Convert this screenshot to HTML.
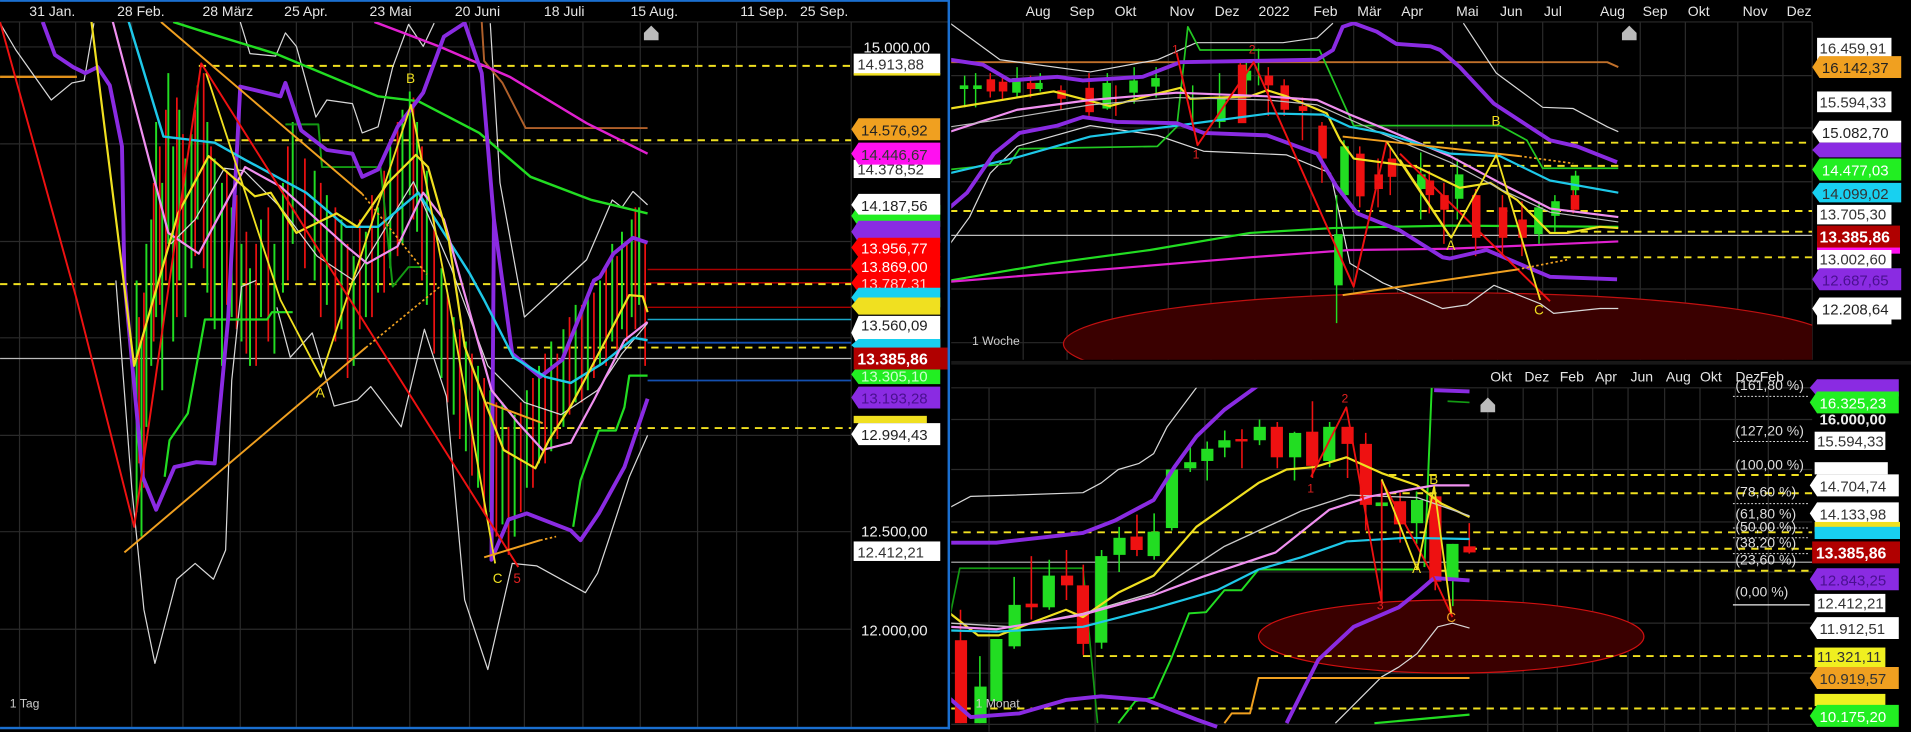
<!DOCTYPE html>
<html><head><meta charset="utf-8"><style>
html,body{margin:0;padding:0;background:#000;}
svg{display:block;}
text{font-family:"Liberation Sans",sans-serif;}
</style></head><body>
<svg width="1911" height="732" viewBox="0 0 1567 600.25" xmlns="http://www.w3.org/2000/svg">
<rect width="1567" height="601" fill="#000"/>
<defs>
<clipPath id="cL"><rect x="0" y="18" width="698" height="578"/></clipPath>
<clipPath id="cT"><rect x="780" y="18" width="706" height="277"/></clipPath>
<clipPath id="cB"><rect x="780" y="318" width="706" height="282"/></clipPath>
</defs>

<!-- ================= LEFT PANEL ================= -->
<g stroke="#2a2a2a" stroke-width="1">
<path d="M0 18H778 M0 38.5H698 M0 118H698 M0 198H698 M0 277H698 M0 357H698 M0 436H698 M0 516H698"/>
<path d="M16 18V596 M62 18V596 M108 18V596 M150 18V596 M197 18V596 M243 18V596 M289 18V596 M336 18V596 M385 18V596 M430 18V596 M478 18V596 M525 18V596 M572 18V596 M604 18V596 M654 18V596 M698 18V596"/>
</g>
<g fill="#e6e6e6" font-size="11.5">
<text x="24" y="13">31 Jan.</text><text x="96" y="13">28 Feb.</text><text x="166" y="13">28 März</text>
<text x="233" y="13">25 Apr.</text><text x="303" y="13">23 Mai</text><text x="373" y="13">20 Juni</text>
<text x="446" y="13">18 Juli</text><text x="517" y="13">15 Aug.</text><text x="607" y="13">11 Sep.</text><text x="656" y="13">25 Sep.</text>
</g>
<path d="M528 27 l6 -6 l6 6 v6 h-12z" fill="#bbb"/>

<g clip-path="url(#cL)" fill="none" stroke-linejoin="round">
<!-- horizontal level lines -->
<path d="M0 294H698" stroke="#bbb" stroke-width="1"/>
<path d="M531 221H698 M531 252H698" stroke="#a00" stroke-width="1.2"/>
<path d="M531 232H698" stroke="#c00" stroke-width="1"/>
<path d="M531 262H698" stroke="#1aa6c8" stroke-width="1.2"/>
<path d="M531 281H698 M531 312H698" stroke="#1450b0" stroke-width="1.5"/>
<path d="M0 63H63" stroke="#e0901a" stroke-width="2"/>
<g stroke="#f0e020" stroke-width="1.6" stroke-dasharray="6 5">
<path d="M163 54H698 M176 115H698 M0 233H698 M413 285H698 M410 351H698"/>
</g>
<!-- candles -->
<path stroke="#22dd22" stroke-width="1.6" d="M112 230V420 M116 280V440 M120 200V350 M124 180V300 M128 100V260 M133 150V320 M138 60V200 M142 120V280 M147 90V230 M152 130V260 M157 110V220 M162 70V180 M170 100V240 M176 130V270 M182 150V300 M190 170V260 M198 200V280 M205 220V300 M214 180V260 M225 200V290 M232 150V240 M240 100V200 M258 140V230 M268 160V250 M280 180V270 M290 210V300 M300 190V260 M310 170V240 M320 120V220 M330 90V200 M336 75V160 M342 100V190 M350 140V250 M362 220V310 M372 260V340 M382 280V370 M392 300V400 M402 320V420 M412 330V430 M422 340V440 M432 320V400 M442 300V380 M452 280V370 M462 270V350 M472 250V330 M482 240V320 M492 230V300 M502 200V280 M510 190V270 M518 180V260 M524 170V250"/>
<path stroke="#ee1111" stroke-width="1.4" d="M114 260V380 M118 240V400 M126 150V280 M131 120V250 M136 90V230 M145 80V260 M150 110V200 M160 90V210 M167 60V220 M173 120V260 M186 140V250 M194 160V270 M202 190V290 M210 200V300 M220 170V280 M236 120V230 M250 130V220 M263 150V260 M275 170V280 M285 200V310 M295 180V270 M305 160V260 M315 140V240 M326 100V210 M339 80V180 M346 120V230 M356 180V290 M367 240V330 M377 270V360 M387 290V390 M397 310V420 M407 330V440 M417 350V455 M427 330V420 M437 310V400 M447 290V380 M457 290V360 M467 260V340 M477 250V330 M487 240V310 M497 220V300 M506 210V290 M514 200V280 M521 170V270 M529 200V300"/>
<!-- white envelopes -->
<g stroke="#d8d8d8" stroke-width="1">
<path d="M0 19L13 41L42 82L59 68L69 66L77 19"/>
<path d="M197 18L205 44L226 46L234 27L243 38L259 96L268 82L289 85L297 109L310 104L322 55L335 20L347 38L356 19"/>
<path d="M95 230L108 400L118 500L127 544L145 475L160 462L175 475L185 451L190 312L198 235L210 230"/>
<path d="M227 252L238 293L256 273L274 333L293 328L304 317L329 350L348 270L366 325L381 492L400 549L420 462L440 464L480 486L490 470L500 440L516 391L531 357"/>
<path d="M402 19L410 150L430 260L481 213L502 164L510 170L519 157L531 168"/>
<path d="M140 200L160 180L184 138L200 140L230 170L260 210L290 230L339 149L370 220L400 300L430 330L460 340L490 320L510 290L531 265"/>
</g>
<!-- green long MA -->
<path d="M142 18L167 26L226 44L310 79L343 83L393 109L435 145L485 164L531 175" stroke="#22dd22" stroke-width="2"/>
<path d="M395 18L397 50L412 68L431 105L531 105" stroke="#b0602a" stroke-width="1.6"/>
<path d="M307 18L360 38L418 63L481 101L531 126" stroke="#e020d0" stroke-width="2"/>
<!-- green steps -->
<path d="M135 391L139 361L154 339L168 262L219 262L223 256L240 256" stroke="#22dd22" stroke-width="1.8"/>
<path d="M470 432L476 394L491 353L505 353L512 334L516 308L531 308" stroke="#22dd22" stroke-width="1.8"/>
<path d="M234 102L261 102L264 137L312 137L322 235L335 219L345 219" stroke="#139a13" stroke-width="1.6"/>
<!-- purple bands -->
<g stroke="#8a2be2" stroke-width="3.2">
<path d="M35 18L45 45L60 55L70 60L80 55L90 70L100 120L102 230L117 391L128 418L143 383L161 379L176 380L187 262L197 71L230 79L234 68L247 107L268 123L289 126L297 145L310 139L326 104L347 76L364 30L381 19L395 60L405 180L403 459L417 426L432 421L468 435L476 443L491 421L512 383L531 327"/>
<path d="M405 180L420 290L443 309L461 295L487 230L492 227L503 208L519 195L531 199"/>
</g>
<!-- cyan / pink MAs -->
<path d="M105 16L134 112L176 117L201 131L251 158L284 186L310 186L343 158L364 191L385 224L397 246L421 293L447 309L468 314L494 298L520 277L531 279" stroke="#1ec8e8" stroke-width="2"/>
<path d="M92 16L138 191L163 208L201 137L230 153L284 202L301 216L326 202L347 158L364 180L403 320L425 347L445 369L468 363L487 328L512 279L531 264" stroke="#f090f0" stroke-width="1.8"/>
<!-- yellow MA -->
<path d="M75 18L110 300L146 175L171 128L209 161L222 158L243 191L276 175L293 186L318 150L341 127L351 137L368 197L381 284L399 333L413 369L439 384L450 361L468 333L494 284L516 242L527 243L531 256" stroke="#f0e020" stroke-width="1.8"/>
<!-- zigzags -->
<path d="M169 60L230 246L263 309L337 86L368 246L406 462" stroke="#f0e020" stroke-width="1.5"/>
<path d="M0 18L63 246L110 432L139 230L165 52L425 465" stroke="#ee1111" stroke-width="1.6"/>
<path d="M132 18L297 159" stroke="#f0a020" stroke-width="1.6"/>
<path d="M297 159L350 225" stroke="#f0a020" stroke-width="1.4" stroke-dasharray="2 2"/>
<path d="M102 453L300 285" stroke="#f0a020" stroke-width="1.6"/>
<path d="M300 285L362 234" stroke="#f0a020" stroke-width="1.4" stroke-dasharray="2 2"/>
<path d="M397 457L443 443" stroke="#f0a020" stroke-width="1.6"/>
<path d="M443 443L456 440" stroke="#f0a020" stroke-width="1.4" stroke-dasharray="2 2"/>
<path d="M399 330L445 347" stroke="#f0a020" stroke-width="1.6"/>
</g>
<g font-size="11">
<text x="333" y="68" fill="#f0e020">B</text>
<text x="259" y="326" fill="#f0e020">A</text>
<text x="404" y="478" fill="#f0e020">C</text>
<text x="421" y="478" fill="#e02020">5</text>
<text x="8" y="580" fill="#ccc" font-size="10">1 Tag</text>
</g>

<!-- left labels -->
<g font-size="12.3">
<text x="708" y="43" fill="#eee">15.000,00</text>
<rect x="700" y="44" width="71" height="17" fill="#fff"/><rect x="700" y="60" width="71" height="2" fill="#f0e020"/><text x="703" y="57" fill="#333">14.913,88</text>
<rect x="700" y="131" width="71" height="15" fill="#fff"/><text x="703" y="143" fill="#333">14.378,52</text>
<path d="M698 106l6-9h67v18h-67z" fill="#f0a020"/><text x="706" y="111" fill="#222">14.576,92</text>
<path d="M698 126l6-9h67v18h-67z" fill="#ff10f0"/><text x="706" y="131" fill="#333">14.446,67</text>
<path d="M698 177l6-9h67v18h-67z" fill="#22ee22"/>
<path d="M698 168l6-9h67v17h-67z" fill="#fff"/><text x="706" y="173" fill="#222">14.187,56</text>
<path d="M698 190l6-9h67v18h-67z" fill="#8a2be2"/>
<path d="M698 203l6-8h67v16h-67z" fill="#f00"/><text x="706" y="208" fill="#fff">13.956,77</text>
<path d="M698 218l6-8h67v16h-67z" fill="#f00"/><text x="706" y="223" fill="#fff">13.869,00</text>
<path d="M698 232l6-8h67v16h-67z" fill="#f00"/><text x="706" y="237" fill="#fcc">13.787,31</text>
<path d="M698 244l6-8h67v16h-67z" fill="#18d0f0"/>
<path d="M698 251l6-7h67v14h-67z" fill="#f0e020"/>
<path d="M698 273l6-14h67v26h-67z" fill="#fff"/><text x="706" y="271" fill="#222">13.560,09</text>
<path d="M698 283l6-5h67v10h-67z" fill="#18d0f0"/>
<path d="M698 307l6-8h67v16h-67z" fill="#22ee22"/><text x="706" y="313" fill="#cfc">13.305,10</text>
<rect x="700" y="285" width="77" height="18" fill="#b00000"/><text x="703" y="299" fill="#fff" font-weight="bold" font-size="13">13.385,86</text>
<path d="M698 326l6-9h67v18h-67z" fill="#8a2be2"/><text x="706" y="331" fill="#4a1090">13.193,28</text>
<rect x="700" y="341" width="60" height="6" fill="#f0e020"/>
<path d="M698 356l6-9h67v18h-67z" fill="#fff"/><text x="706" y="361" fill="#222">12.994,43</text>
<text x="706" y="440" fill="#eee">12.500,00</text>
<rect x="700" y="444" width="71" height="16" fill="#fff"/><text x="703" y="457" fill="#333">12.412,21</text>
<text x="706" y="521" fill="#eee">12.000,00</text>
</g>
<!-- left panel frame -->
<rect x="0" y="0" width="779" height="1.5" fill="#1a6fd0"/>
<rect x="777" y="0" width="2" height="598" fill="#1a6fd0"/>
<rect x="0" y="596" width="779" height="2" fill="#1a6fd0"/>

<!-- ================= TOP RIGHT PANEL ================= -->
<g stroke="#2a2a2a" stroke-width="1">
<path d="M780 18H1486 M780 62H1486 M780 105H1486 M780 149H1486 M780 237H1486 M780 281H1486"/>
<path d="M839 18V295 M875 18V295 M912 18V295 M958 18V295 M993 18V295 M1029 18V295 M1075 18V295 M1110 18V295 M1146 18V295 M1191 18V295 M1228 18V295 M1265 18V295 M1310 18V295 M1345 18V295 M1382 18V295 M1425 18V295 M1462 18V295 M1486 18V295"/>
</g>
<g fill="#e6e6e6" font-size="11.5">
<text x="841" y="13">Aug</text><text x="877" y="13">Sep</text><text x="914" y="13">Okt</text><text x="959" y="13">Nov</text>
<text x="996" y="13">Dez</text><text x="1032" y="13">2022</text><text x="1077" y="13">Feb</text><text x="1113" y="13">Mär</text>
<text x="1149" y="13">Apr</text><text x="1194" y="13">Mai</text><text x="1230" y="13">Jun</text><text x="1266" y="13">Jul</text>
<text x="1312" y="13">Aug</text><text x="1347" y="13">Sep</text><text x="1384" y="13">Okt</text><text x="1429" y="13">Nov</text><text x="1465" y="13">Dez</text>
</g>
<path d="M1330 27 l6 -6 l6 6 v6 h-12z" fill="#bbb"/>
<g clip-path="url(#cT)" fill="none" stroke-linejoin="round">
<ellipse cx="1190" cy="282" rx="318" ry="42" fill="#3a0000" stroke="#c01010" stroke-width="1"/>
<path d="M779 193H1486" stroke="#bbb" stroke-width="1"/>
<g stroke="#f0e020" stroke-width="1.6" stroke-dasharray="6 5">
<path d="M1156 117H1486 M1156 136H1486 M779 173H1486 M1285 190H1486 M1271 211H1486"/>
</g>
<path d="M779 51H1318L1327 55" stroke="#c0702a" stroke-width="1.6"/>
<g stroke="#d8d8d8" stroke-width="1">
<path d="M779 19L820 49L894 59L949 49L981 35L1052 35L1080 31L1093 19M1200 19L1227 60L1265 88L1290 89L1318 104L1327 108"/>
<path d="M779 200L795 178L812 142L834 120L894 103L949 111L987 124L1055 127L1091 142L1107 216L1134 232L1167 246L1183 253L1203 250L1225 234L1263 249L1274 257L1312 253L1327 253"/>
</g>
<path d="M779 230L861 216L943 205L1025 191L1093 187L1189 185L1327 186" stroke="#22dd22" stroke-width="1.8"/>
<path d="M779 231L916 220L1025 211L1107 205L1189 204L1327 198" stroke="#e020d0" stroke-width="1.8"/>
<path d="M779 139L828 134L836 122L949 120L965 104L974 22L984 41L1082 41L1110 103L1230 103L1252 115L1265 138L1327 138" stroke="#22c822" stroke-width="1.4"/>
<!-- candles -->
<path stroke="#22dd22" stroke-width="1.2" d="M791 62V88 M800 60V88 M834 55V80 M853 60V75 M908 60V90 M930 55V85 M948 55V80 M978 70V100 M1000 60V105 M1022 50V80 M1032 40V70 M1096 160V265 M1102 115V160 M1165 125V180 M1195 130V180 M1262 165V200 M1275 160V190 M1292 140V165"/>
<path stroke="#ee1111" stroke-width="1.2" d="M812 60V80 M822 62V82 M845 62V80 M870 70V90 M893 60V95 M915 70V95 M1017 50V100 M1040 55V95 M1053 65V95 M1068 80V115 M1084 100V150 M1115 120V170 M1130 130V170 M1140 120V160 M1172 140V175 M1184 150V200 M1210 155V210 M1232 160V210 M1248 165V210 M1290 155V175"/>
<g fill="#22dd22">
<rect x="787" y="70" width="7" height="3"/><rect x="798" y="70" width="7" height="3"/><rect x="830" y="64" width="7" height="12"/><rect x="848" y="68" width="7" height="5"/><rect x="904" y="68" width="7" height="21"/><rect x="926" y="66" width="7" height="10"/><rect x="944" y="64" width="7" height="7"/><rect x="998" y="80" width="7" height="20"/><rect x="1019" y="58" width="7" height="8"/><rect x="1094" y="192" width="7" height="42"/><rect x="1099" y="120" width="7" height="40"/><rect x="1162" y="143" width="7" height="12"/><rect x="1193" y="143" width="7" height="20"/><rect x="1258" y="170" width="7" height="22"/><rect x="1272" y="165" width="7" height="12"/><rect x="1288" y="144" width="7" height="12"/>
</g>
<g fill="#ee1111">
<rect x="809" y="65" width="7" height="10"/><rect x="819" y="67" width="7" height="8"/><rect x="842" y="68" width="7" height="5"/><rect x="867" y="74" width="7" height="7"/><rect x="890" y="72" width="7" height="20"/><rect x="1015" y="53" width="7" height="48"/><rect x="1037" y="62" width="7" height="8"/><rect x="1050" y="70" width="7" height="20"/><rect x="1065" y="87" width="7" height="4"/><rect x="1081" y="103" width="7" height="27"/><rect x="1112" y="126" width="7" height="35"/><rect x="1127" y="143" width="7" height="12"/><rect x="1138" y="130" width="7" height="15"/><rect x="1169" y="148" width="7" height="12"/><rect x="1181" y="160" width="7" height="12"/><rect x="1207" y="160" width="7" height="35"/><rect x="1229" y="170" width="7" height="25"/><rect x="1245" y="180" width="7" height="15"/><rect x="1288" y="160" width="7" height="12"/>
</g>
<path d="M779 89L864 75L910 87L940 79L968 72L976 81L1025 79L1039 74L1055 79L1088 93L1099 115L1110 130L1162 137L1197 154L1222 150L1244 164L1271 191L1285 191L1312 186L1327 187" stroke="#f0e020" stroke-width="1.8"/>
<path d="M779 108L834 90L894 82L965 76L1039 79L1080 82L1107 94L1134 105L1189 128L1230 150L1271 171L1327 178" stroke="#f090f0" stroke-width="1.8"/>
<path d="M779 104L834 96L894 86L965 80L1039 82L1080 86L1107 98L1134 110L1189 133L1230 155L1271 174L1327 182" stroke="#bbb" stroke-width="1"/>
<path d="M779 142L834 129L894 112L965 103L1041 93L1085 94L1107 104L1134 109L1189 126L1230 128L1271 148L1327 158" stroke="#1ec8e8" stroke-width="1.8"/>
<g stroke="#8a2be2" stroke-width="3.2">
<path d="M779 49L806 53L828 66L867 63L888 66L937 63L968 51L1080 49L1093 41L1101 22L1110 19L1129 26L1145 36L1173 38L1181 41L1197 55L1225 85L1271 115L1293 120L1326 133"/>
<path d="M779 170L793 158L815 126L836 109L867 103L888 96L916 100L965 101L987 109L1039 111L1080 126L1096 153L1113 175L1148 189L1183 211L1189 212L1219 205L1271 227L1326 229"/>
</g>
<path d="M965 44L982 119L1028 51L1110 235L1137 116M1148 126L1271 247" stroke="#ee1111" stroke-width="1.6"/>
<path d="M1137 116L1189 194M1148 131L1190 195L1227 127L1263 246" stroke="#f0e020" stroke-width="1.5"/>
<path d="M1101 112L1246 128M1101 242L1244 221" stroke="#f0a020" stroke-width="1.6"/>
<path d="M1246 128L1290 134M1244 221L1285 213" stroke="#f0a020" stroke-width="1.4" stroke-dasharray="2 2"/>
</g>
<g font-size="11">
<text x="1223" y="103" fill="#f0e020">B</text><text x="1186" y="205" fill="#f0e020">A</text><text x="1258" y="258" fill="#f0e020">C</text>
<text x="1024" y="44" fill="#e02020" font-size="10">2</text><text x="961" y="44" fill="#e02020" font-size="10">1</text><text x="978" y="130" fill="#e02020" font-size="10">1</text>
<text x="797" y="283" fill="#ccc" font-size="10">1 Woche</text>
</g>
<!-- top right labels -->
<g font-size="12.3">
<rect x="1490" y="31" width="61" height="17" fill="#fff"/><text x="1492" y="44" fill="#333">16.459,91</text>
<rect x="1490" y="48" width="61" height="10" fill="#fff"/>
<path d="M1486 55l6-9h67v18h-67z" fill="#f0a020"/><text x="1494" y="60" fill="#222">16.142,37</text>
<rect x="1490" y="75" width="61" height="17" fill="#fff"/><text x="1492" y="88" fill="#333">15.594,33</text>
<path d="M1486 108l6-9h67v18h-67z" fill="#fff"/><text x="1494" y="113" fill="#222">15.082,70</text>
<path d="M1486 123l6-6h67v12h-67z" fill="#8a2be2"/>
<path d="M1486 139l6-9h67v18h-67z" fill="#22ee22"/><text x="1494" y="144" fill="#fff">14.477,03</text>
<path d="M1486 158l6-8h67v16h-67z" fill="#18d0f0"/><text x="1494" y="163" fill="#333">14.099,02</text>
<rect x="1490" y="168" width="61" height="16" fill="#fff"/><text x="1492" y="180" fill="#333">13.705,30</text>
<rect x="1490" y="198" width="68" height="10" fill="#ff10f0"/>
<rect x="1490" y="205" width="61" height="16" fill="#fff"/><text x="1492" y="217" fill="#333">13.002,60</text>
<rect x="1490" y="185" width="68" height="18" fill="#b00000"/><text x="1492" y="199" fill="#fff" font-weight="bold" font-size="13">13.385,86</text>
<path d="M1486 229l6-9h67v18h-67z" fill="#8a2be2"/><text x="1494" y="234" fill="#4a1090">12.687,65</text>
<rect x="1490" y="256" width="61" height="10" fill="#fff"/>
<path d="M1486 253l6-9h67v18h-67z" fill="#fff"/><text x="1494" y="258" fill="#222">12.208,64</text>
</g>
<rect x="780" y="296" width="787" height="3" fill="#181818"/>

<!-- ================= BOTTOM RIGHT PANEL ================= -->
<g stroke="#2a2a2a" stroke-width="1">
<path d="M780 318H1486 M780 344H1486 M780 385H1486 M780 428H1486 M780 469H1486 M780 511H1486 M780 552H1486 M780 594H1486"/>
<path d="M811 318V600 M898 318V600 M988 318V600 M1220 318V600 M1249 318V600 M1277 318V600 M1306 318V600 M1335 318V600 M1365 318V600 M1394 318V600 M1423 318V600 M1450 318V600"/>
</g>
<g fill="#e6e6e6" font-size="11.5">
<text x="1222" y="313">Okt</text><text x="1250" y="313">Dez</text><text x="1279" y="313">Feb</text><text x="1308" y="313">Apr</text>
<text x="1337" y="313">Jun</text><text x="1366" y="313">Aug</text><text x="1394" y="313">Okt</text><text x="1423" y="313">Dez</text><text x="1443" y="313">Feb</text>
</g>
<path d="M1214 332 l6 -6 l6 6 v6 h-12z" fill="#bbb"/>
<g clip-path="url(#cB)" fill="none" stroke-linejoin="round">
<ellipse cx="1190" cy="522" rx="158" ry="30" fill="#3a0000" stroke="#d01010" stroke-width="1"/>
<path d="M779 461H1486" stroke="#bbb" stroke-width="1"/>
<g stroke="#f0e020" stroke-width="1.6" stroke-dasharray="6 5">
<path d="M1139 389.5H1486 M1139 404.5H1486 M779 436.5H1486 M1205 450H1486 M1180 468H1486 M888 538H1486 M779 581H1486"/>
</g>
<g stroke="#d8d8d8" stroke-width="1">
<path d="M779 416L796 407L831 406L888 404L903 396L917 385L934 380L946 372L957 350L981 318L990 300"/>
<path d="M1095 593L1133 555L1147 547L1162 536L1179 514L1191 511L1205 515"/>
</g>
<path d="M779 505L787 466L888 466L900 593" stroke="#139a13" stroke-width="1.4"/>
<path d="M1187 329L1205 330" stroke="#139a13" stroke-width="1.4"/>
<path d="M917 593L931 575L946 572L960 541L975 503L989 502L1004 484L1018 484L1032 467L1159 467M1168 465L1174 318" stroke="#22dd22" stroke-width="1.6"/>
<path d="M1004 593L1010 585L1025 585L1032 556L1205 556" stroke="#f0a020" stroke-width="1.6"/>
<path d="M1127 593L1205 586" stroke="#22dd22" stroke-width="1.8"/>
<!-- candles -->
<g stroke-width="1.3">
<path stroke="#ee1111" d="M787.6 500V593 M845.7 456V508 M874.5 451V492 M888.3 463V537 M932.3 422V456 M1018.4 352V384 M1047.4 346V384 M1076.2 329V392 M1105 350V392 M1119.9 355V435 M1148.1 404V445 M1176.9 407V484 M1204.8 429V454"/>
<path stroke="#22dd22" d="M803.5 538V593 M817.3 524V575 M831.6 473V532 M860.4 459V500 M903.3 451V532 M917.7 432V469 M946.4 421V459 M960.8 385V435 M976 366V387 M989.9 362V394 M1004.3 353V375 M1032.8 344V365 M1061.5 354V394 M1090.3 346V383 M1132.9 411V415 M1161.6 403V446 M1191.3 446V497"/>
</g>
<g fill="#ee1111">
<rect x="783" y="525" width="10" height="68"/><rect x="841" y="495" width="10" height="3"/><rect x="870" y="472" width="10" height="8"/><rect x="883" y="480" width="10" height="48"/><rect x="927" y="440" width="10" height="11"/><rect x="1013" y="360" width="10" height="2"/><rect x="1042" y="350" width="10" height="25"/><rect x="1071" y="354" width="10" height="28"/><rect x="1100" y="350" width="10" height="14"/><rect x="1115" y="364" width="10" height="50"/><rect x="1143" y="411" width="10" height="19"/><rect x="1172" y="407" width="10" height="70"/><rect x="1200" y="448" width="10" height="5"/>
</g>
<g fill="#22dd22">
<rect x="799" y="563" width="10" height="30"/><rect x="812" y="524" width="10" height="51"/><rect x="827" y="496" width="10" height="34"/><rect x="855" y="472" width="10" height="26"/><rect x="898" y="456" width="10" height="71"/><rect x="913" y="441" width="10" height="14"/><rect x="941" y="436" width="10" height="20"/><rect x="956" y="385" width="10" height="48"/><rect x="971" y="379" width="10" height="5"/><rect x="985" y="368" width="10" height="10"/><rect x="999" y="361" width="10" height="6"/><rect x="1028" y="350" width="10" height="11"/><rect x="1057" y="355" width="10" height="20"/><rect x="1085" y="350" width="10" height="28"/><rect x="1128" y="412" width="10" height="3"/><rect x="1157" y="410" width="10" height="19"/><rect x="1186" y="446" width="10" height="28"/>
</g>
<path d="M779 503L802 521L819 521L845 511L874 500L888 506L917 486L946 472L981 432L1032 396L1055 385L1078 383L1104 375L1133 388L1162 398L1182 413L1205 424" stroke="#f0e020" stroke-width="1.8"/>
<path d="M779 511L830 514L888 503L946 486L1004 448L1067 419L1107 406L1162 408L1205 423" stroke="#c8c8c8" stroke-width="1.1"/>
<path d="M779 514L817 516L888 504L946 488L986 473L1046 453L1090 418L1124 407L1176 398L1205 398" stroke="#f090f0" stroke-width="1.8"/>
<path d="M779 517L817 518L888 514L946 499L998 484L1032 467L1067 457L1104 444L1153 441L1205 442" stroke="#1ec8e8" stroke-width="1.8"/>
<g stroke="#8a2be2" stroke-width="3.2">
<path d="M779 445L817 445L888 437L914 427L946 410L963 383L981 358L1004 336L1029 318L1040 310"/>
<path d="M779 573L796 588L836 585L874 574L903 571L940 574L981 590L998 596"/>
<path d="M1055 593L1081 541L1110 514L1147 498L1162 486L1176 474L1205 476"/>
<path d="M1176 320L1205 321"/>
</g>
<path d="M1075 391L1104 334L1133 494L1133 394L1176 474L1191 506" stroke="#ee1111" stroke-width="1.5"/>
<path d="M1133 393L1162 467L1176 399L1190 503" stroke="#f0e020" stroke-width="1.5"/>
</g>
<g font-size="11">
<text x="1172" y="397" fill="#f0e020">B</text><text x="1158" y="470" fill="#f0e020">A</text><text x="1186" y="510" fill="#f0a020">C</text>
<text x="1100" y="330" fill="#e02020" font-size="10">2</text><text x="1072" y="404" fill="#e02020" font-size="10">1</text><text x="1129" y="500" fill="#e02020" font-size="10">3</text>
<text x="800" y="580" fill="#ccc" font-size="10">1 Monat</text>
</g>
<!-- fib labels -->
<g font-size="11.5" fill="#ddd">
<text x="1423" y="320">(161,80 %)</text><text x="1423" y="357">(127,20 %)</text><text x="1423" y="385">(100,00 %)</text>
<text x="1423" y="407">(78,60 %)</text><text x="1423" y="425">(61,80 %)</text><text x="1423" y="436">(50,00 %)</text>
<text x="1423" y="449">(38,20 %)</text><text x="1423" y="463">(23,60 %)</text><text x="1423" y="489">(0,00 %)</text>
</g>
<g stroke="#ddd" stroke-width="0.8" stroke-dasharray="1.5 1.5">
<path d="M1421 325H1484 M1421 362H1484 M1421 413H1484 M1421 433H1484 M1421 441H1484 M1421 454H1484"/>
</g>
<path d="M1421 496H1484" stroke="#eee" stroke-width="1"/>
<!-- bottom right labels -->
<g font-size="12.3">
<path d="M1484 318l6-7h67v14h-67z" fill="#8a2be2"/>
<path d="M1484 330l6-9h67v18h-67z" fill="#22ee22"/><text x="1492" y="335" fill="#fff">16.325,23</text>
<text x="1492" y="348" fill="#eee" font-weight="bold">16.000,00</text>
<rect x="1488" y="354" width="58" height="15" fill="#fff"/><text x="1490" y="366" fill="#333">15.594,33</text>
<rect x="1488" y="379" width="60" height="10" fill="#fff"/>
<path d="M1484 398l6-9h67v18h-67z" fill="#fff"/><text x="1492" y="403" fill="#333">14.704,74</text>
<path d="M1484 421l6-9h67v18h-67z" fill="#fff"/><text x="1492" y="426" fill="#333">14.133,98</text>
<rect x="1488" y="428" width="70" height="8" fill="#f0e020"/>
<rect x="1488" y="432" width="70" height="10" fill="#18d0f0"/>
<rect x="1486" y="444" width="72" height="18" fill="#b00000"/><text x="1489" y="458" fill="#fff" font-weight="bold" font-size="13">13.385,86</text>
<path d="M1484 475l6-9h67v18h-67z" fill="#8a2be2"/><text x="1492" y="480" fill="#4a1090">12.843,25</text>
<rect x="1488" y="487" width="58" height="15" fill="#fff"/><text x="1490" y="499" fill="#333">12.412,21</text>
<path d="M1484 515l6-9h67v18h-67z" fill="#fff"/><text x="1492" y="520" fill="#333">11.912,51</text>
<rect x="1488" y="531" width="58" height="16" fill="#f0f020"/><text x="1490" y="543" fill="#333">11.321,11</text>
<path d="M1484 556l6-9h67v18h-67z" fill="#f0a020"/><text x="1492" y="561" fill="#333">10.919,57</text>
<rect x="1488" y="569" width="58" height="10" fill="#f0f020"/>
<path d="M1484 587l6-9h67v18h-67z" fill="#22ee22"/><text x="1492" y="592" fill="#fff">10.175,20</text>
</g>
</svg>
</body></html>
